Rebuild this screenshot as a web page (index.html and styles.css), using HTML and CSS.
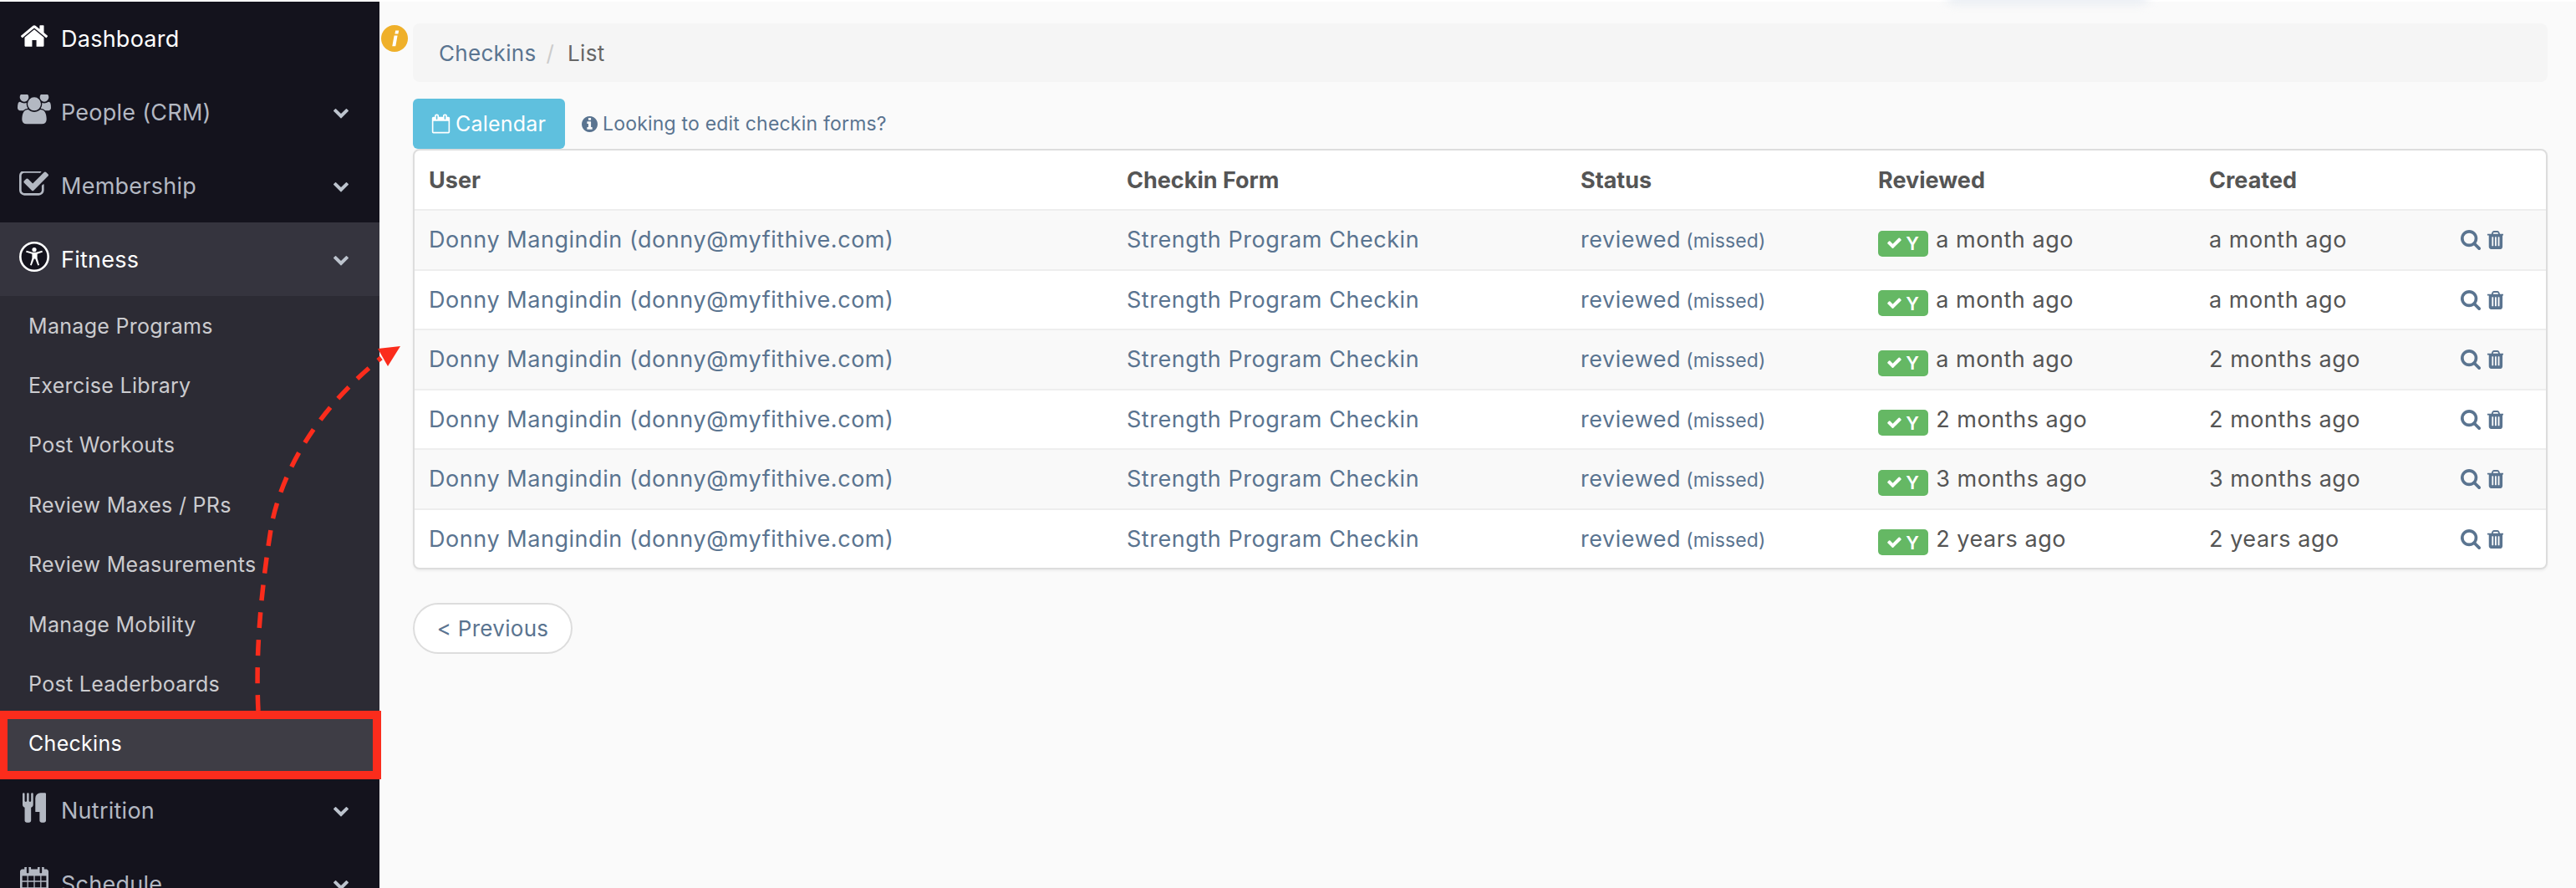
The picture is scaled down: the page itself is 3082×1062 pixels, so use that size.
FILE: index.html
```html
<!DOCTYPE html>
<html lang="en">
<head>
<meta charset="utf-8">
<title>Checkins</title>
<link rel="stylesheet" href="styles.css">
</head>
<body>
<svg class="defs" width="0" height="0" aria-hidden="true">
  <symbol id="i-home" viewBox="96 256 1600 1280"><path d="M1472 992v480q0 26-19 45t-45 19h-384v-384h-256v384h-384q-26 0-45-19t-19-45v-480q0-1 .5-3t.5-3l575-474 575 474q1 2 1 6zm223-69l-62 74q-8 9-21 11h-3q-13 0-21-7l-692-577-692 577q-12 8-24 7-13-2-21-11l-62-74q-8-10-7-23.5t11-21.5l719-599q32-26 76-26t76 26l244 204v-195q0-14 9-23t23-9h192q14 0 23 9t9 23v408l219 182q10 8 11 21.5t-7 23.5z"/></symbol>
  <symbol id="i-users" viewBox="0 128 1920 1664"><path d="M593 896q-162 5-265 128h-134q-82 0-138-40.5t-56-118.5q0-353 124-353 6 0 43.5 21t97.5 42.5 119 21.5q67 0 133-23-5 37-5 66 0 139 81 256zm1071 637q0 120-73 189.5t-194 69.5h-874q-121 0-194-69.5t-73-189.5q0-53 3.5-103.5t14-109 26.5-108.5 43-97.5 62-81 85.5-53.5 111.5-20q10 0 43 21.5t73 48 107 48 135 21.5 135-21.5 107-48 73-48 43-21.5q61 0 111.5 20t85.5 53.5 62 81 43 97.5 26.5 108.5 14 109 3.5 103.5zm-1024-1277q0 106-75 181t-181 75-181-75-75-181 75-181 181-75 181 75 75 181zm704 384q0 159-112.5 271.5t-271.5 112.5-271.5-112.5-112.5-271.5 112.5-271.5 271.5-112.5 271.5 112.5 112.5 271.5zm576 225q0 78-56 118.5t-138 40.5h-134q-103-123-265-128 81-117 81-256 0-29-5-66 66 23 133 23 59 0 119-21.5t97.5-42.5 43.5-21q124 0 124 353zm-128-609q0 106-75 181t-181 75-181-75-75-181 75-181 181-75 181 75 75 181z"/></symbol>
  <symbol id="i-check-sq" viewBox="64 192 1664 1344"><path d="M1472 930v318q0 119-84.5 203.5t-203.5 84.5h-832q-119 0-203.5-84.5t-84.5-203.5v-832q0-119 84.5-203.5t203.5-84.5h832q63 0 117 25 15 7 18 23 3 17-9 29l-49 49q-10 10-23 10-3 0-9-2-23-6-45-6h-832q-66 0-113 47t-47 113v832q0 66 47 113t113 47h832q66 0 113-47t47-113v-254q0-13 9-22l64-64q10-10 23-10 6 0 12 3 20 8 20 29zm231-489l-814 814q-24 24-57 24t-57-24l-430-430q-24-24-24-57t24-57l110-110q24-24 57-24t57 24l263 263 647-647q24-24 57-24t57 24l110 110q24 24 24 57t-24 57z"/></symbol>
  <symbol id="i-access" viewBox="0 0 36 36">
    <circle cx="18" cy="18" r="18" fill="#fff"/>
    <circle cx="18" cy="18" r="15.4" fill="#14131d"/>
    <circle cx="18" cy="9.5" r="2.6" fill="#fff"/>
    <path fill="#fff" d="M8 12.4l.7-1.6 7 1.9h4.6l7-1.9.7 1.6-6.4 2.3v5l2.4 8.2-1.7.6-3.1-8h-1.4l-3.1 8-1.7-.6 2.4-8.2v-5z"/>
  </symbol>
  <symbol id="i-cutlery" viewBox="192 0 1408 1792"><path d="M832 64v640q0 61-35.5 111t-92.5 70v779q0 52-38 90t-90 38h-128q-52 0-90-38t-38-90v-779q-57-20-92.5-70t-35.5-111v-640q0-26 19-45t45-19 45 19 19 45v416q0 26 19 45t45 19 45-19 19-45v-416q0-26 19-45t45-19 45 19 19 45v416q0 26 19 45t45 19 45-19 19-45v-416q0-26 19-45t45-19 45 19 19 45zm768 0v1600q0 52-38 90t-90 38h-128q-52 0-90-38t-38-90v-512h-224q-13 0-22.5-9.5t-9.5-22.5v-800q0-132 94-226t226-94h256q26 0 45 19t19 45z"/></symbol>
  <symbol id="i-calendar" viewBox="64 128 1664 1664"><path d="M192 1664h288v-288h-288v288zm352 0h320v-288h-320v288zm-352-352h288v-320h-288v320zm352 0h320v-320h-320v320zm-352-384h288v-288h-288v288zm736 736h320v-288h-320v288zm-384-736h320v-288h-320v288zm768 736h288v-288h-288v288zm-384-352h320v-320h-320v320zm-352-864v-288q0-13-9.5-22.5t-22.5-9.5h-64q-13 0-22.5 9.5t-9.5 22.5v288q0 13 9.5 22.5t22.5 9.5h64q13 0 22.5-9.5t9.5-22.5zm736 864h288v-320h-288v320zm-384-384h320v-288h-320v288zm384 0h288v-288h-288v288zm32-480v-288q0-13-9.5-22.5t-22.5-9.5h-64q-13 0-22.5 9.5t-9.5 22.5v288q0 13 9.5 22.5t22.5 9.5h64q13 0 22.5-9.5t9.5-22.5zm384-64v1280q0 52-38 90t-90 38h-1408q-52 0-90-38t-38-90v-1280q0-52 38-90t90-38h128v-96q0-66 47-113t113-47h64q66 0 113 47t47 113v96h384v-96q0-66 47-113t113-47h64q66 0 113 47t47 113v96h128q52 0 90 38t38 90z"/></symbol>
  <symbol id="i-calendar-o" viewBox="0 0 1792 1792"><path d="M192 1664h1408v-1024h-1408v1024zm384-1216v-288q0-14-9-23t-23-9h-64q-14 0-23 9t-9 23v288q0 14 9 23t23 9h64q14 0 23-9t9-23zm768 0v-288q0-14-9-23t-23-9h-64q-14 0-23 9t-9 23v288q0 14 9 23t23 9h64q14 0 23-9t9-23zm384-64v1280q0 52-38 90t-90 38h-1408q-52 0-90-38t-38-90v-1280q0-52 38-90t90-38h128v-96q0-66 47-113t113-47h64q66 0 113 47t47 113v96h384v-96q0-66 47-113t113-47h64q66 0 113 47t47 113v96h128q52 0 90 38t38 90z"/></symbol>
  <symbol id="i-chev" viewBox="0 0 1792 1792"><path d="M1683 808l-742 741q-19 19-45 19t-45-19l-742-741q-19-19-19-45.5t19-45.5l166-165q19-19 45-19t45 19l531 531 531-531q19-19 45-19t45 19l166 165q19 19 19 45.5t-19 45.5z"/></symbol>
  <symbol id="i-info" viewBox="128 128 1536 1536"><path d="M1152 1376v-160q0-14-9-23t-23-9h-96v-512q0-14-9-23t-23-9h-320q-14 0-23 9t-9 23v160q0 14 9 23t23 9h96v320h-96q-14 0-23 9t-9 23v160q0 14 9 23t23 9h448q14 0 23-9t9-23zm-128-896v-160q0-14-9-23t-23-9h-192q-14 0-23 9t-9 23v160q0 14 9 23t23 9h192q14 0 23-9t9-23zm640 416q0 209-103 385.5t-279.5 279.5-385.5 103-385.5-103-279.5-279.5-103-385.5 103-385.5 279.5-279.5 385.5-103 385.5 103 279.5 279.5 103 385.5z"/></symbol>
  <symbol id="i-search" viewBox="64 128 1664 1664"><path d="M1216 832q0-185-131.5-316.5t-316.5-131.5-316.5 131.5-131.5 316.5 131.5 316.5 316.5 131.5 316.5-131.5 131.5-316.5zm512 832q0 52-38 90t-90 38q-54 0-90-38l-343-342q-179 124-399 124-143 0-273.5-55.5t-225-150-150-225-55.5-273.5 55.5-273.5 150-225 225-150 273.5-55.5 273.5 55.5 225 150 150 225 55.5 273.5q0 220-124 399l343 343q37 37 37 90z"/></symbol>
  <symbol id="i-trash" viewBox="128 128 1408 1536"><path d="M704 1376v-704q0-14-9-23t-23-9h-64q-14 0-23 9t-9 23v704q0 14 9 23t23 9h64q14 0 23-9t9-23zm256 0v-704q0-14-9-23t-23-9h-64q-14 0-23 9t-9 23v704q0 14 9 23t23 9h64q14 0 23-9t9-23zm256 0v-704q0-14-9-23t-23-9h-64q-14 0-23 9t-9 23v704q0 14 9 23t23 9h64q14 0 23-9t9-23zm-544-992h448l-48-117q-7-9-17-11h-317q-10 2-17 11zm928 32v64q0 14-9 23t-23 9h-96v948q0 83-47 143.5t-113 60.5h-832q-66 0-113-58.5t-47-141.5v-952h-96q-14 0-23-9t-9-23v-64q0-14 9-23t23-9h309l70-167q15-37 54-63t79-26h320q40 0 79 26t54 63l70 167h309q14 0 23 9t9 23z"/></symbol>
  <symbol id="i-check" viewBox="100 350 1600 1200"><path d="M1671 566q0 40-28 68l-724 724-136 136q-28 28-68 28t-68-28l-136-136-362-362q-28-28-28-68t28-68l136-136q28-28 68-28t68 28l294 295 656-657q28-28 68-28t68 28l136 136q28 28 28 68z"/></symbol>
</svg>

<div class="app">
  <nav class="sidebar">
    <a class="nav-row is-lit"><span class="nav-icon"><svg class="ic-home"><use href="#i-home"/></svg></span><span class="nav-label">Dashboard</span></a>
    <a class="nav-row"><span class="nav-icon"><svg class="ic-users"><use href="#i-users"/></svg></span><span class="nav-label">People (CRM)</span><svg class="chev"><use href="#i-chev"/></svg></a>
    <a class="nav-row"><span class="nav-icon"><svg class="ic-sq"><use href="#i-check-sq"/></svg></span><span class="nav-label">Membership</span><svg class="chev"><use href="#i-chev"/></svg></a>
    <a class="nav-row is-lit is-open"><span class="nav-icon"><svg class="ic-access"><use href="#i-access"/></svg></span><span class="nav-label">Fitness</span><svg class="chev"><use href="#i-chev"/></svg></a>
    <div class="subnav">
      <a class="sub-row">Manage Programs</a>
      <a class="sub-row">Exercise Library</a>
      <a class="sub-row">Post Workouts</a>
      <a class="sub-row">Review Maxes / PRs</a>
      <a class="sub-row">Review Measurements</a>
      <a class="sub-row">Manage Mobility</a>
      <a class="sub-row">Post Leaderboards</a>
      <a class="sub-row is-active">Checkins</a>
    </div>
    <a class="nav-row"><span class="nav-icon"><svg class="ic-cut"><use href="#i-cutlery"/></svg></span><span class="nav-label">Nutrition</span><svg class="chev"><use href="#i-chev"/></svg></a>
    <a class="nav-row"><span class="nav-icon"><svg class="ic-cal"><use href="#i-calendar"/></svg></span><span class="nav-label">Schedule</span><svg class="chev"><use href="#i-chev"/></svg></a>
  </nav>

  <main class="main">
    <div class="crumbs"><a class="crumb-link">Checkins</a><span class="crumb-sep">/</span><span class="crumb-cur">List</span></div>
    <div class="toolbar">
      <a class="btn-cal"><svg class="ic-calo"><use href="#i-calendar-o"/></svg>Calendar</a>
      <a class="help-link"><svg class="ic-info"><use href="#i-info"/></svg>Looking to edit checkin forms?</a>
    </div>
    <div class="card">
      <table class="grid">
        <colgroup><col class="c1"><col class="c2"><col class="c3"><col class="c4"><col class="c5"><col class="c6"></colgroup>
        <thead><tr><th>User</th><th>Checkin Form</th><th>Status</th><th>Reviewed</th><th>Created</th><th></th></tr></thead>
        <tbody>
          <tr><td><a>Donny Mangindin (donny@myfithive.com)</a></td><td><a>Strength Program Checkin</a></td><td><a>reviewed</a> <small>(missed)</small></td><td><span class="badge"><svg class="ic-check"><use href="#i-check"/></svg>Y</span> a month ago</td><td>a month ago</td><td><span class="acts"><svg class="ic-search"><use href="#i-search"/></svg><svg class="ic-trash"><use href="#i-trash"/></svg></span></td></tr>
          <tr><td><a>Donny Mangindin (donny@myfithive.com)</a></td><td><a>Strength Program Checkin</a></td><td><a>reviewed</a> <small>(missed)</small></td><td><span class="badge"><svg class="ic-check"><use href="#i-check"/></svg>Y</span> a month ago</td><td>a month ago</td><td><span class="acts"><svg class="ic-search"><use href="#i-search"/></svg><svg class="ic-trash"><use href="#i-trash"/></svg></span></td></tr>
          <tr><td><a>Donny Mangindin (donny@myfithive.com)</a></td><td><a>Strength Program Checkin</a></td><td><a>reviewed</a> <small>(missed)</small></td><td><span class="badge"><svg class="ic-check"><use href="#i-check"/></svg>Y</span> a month ago</td><td>2 months ago</td><td><span class="acts"><svg class="ic-search"><use href="#i-search"/></svg><svg class="ic-trash"><use href="#i-trash"/></svg></span></td></tr>
          <tr><td><a>Donny Mangindin (donny@myfithive.com)</a></td><td><a>Strength Program Checkin</a></td><td><a>reviewed</a> <small>(missed)</small></td><td><span class="badge"><svg class="ic-check"><use href="#i-check"/></svg>Y</span> 2 months ago</td><td>2 months ago</td><td><span class="acts"><svg class="ic-search"><use href="#i-search"/></svg><svg class="ic-trash"><use href="#i-trash"/></svg></span></td></tr>
          <tr><td><a>Donny Mangindin (donny@myfithive.com)</a></td><td><a>Strength Program Checkin</a></td><td><a>reviewed</a> <small>(missed)</small></td><td><span class="badge"><svg class="ic-check"><use href="#i-check"/></svg>Y</span> 3 months ago</td><td>3 months ago</td><td><span class="acts"><svg class="ic-search"><use href="#i-search"/></svg><svg class="ic-trash"><use href="#i-trash"/></svg></span></td></tr>
          <tr><td><a>Donny Mangindin (donny@myfithive.com)</a></td><td><a>Strength Program Checkin</a></td><td><a>reviewed</a> <small>(missed)</small></td><td><span class="badge"><svg class="ic-check"><use href="#i-check"/></svg>Y</span> 2 years ago</td><td>2 years ago</td><td><span class="acts"><svg class="ic-search"><use href="#i-search"/></svg><svg class="ic-trash"><use href="#i-trash"/></svg></span></td></tr>
        </tbody>
      </table>
    </div>
    <a class="btn-prev">&lt; Previous</a>
  </main>
</div>

<svg class="tip-dot" viewBox="0 0 32 32" aria-hidden="true"><circle cx="16" cy="16" r="16" fill="#efb02a"/><path fill="#fff" d="M17.2 6.6h4l-.8 4h-4zM15.6 12.6h4l-2.3 12.6h-4z"/></svg>
<div class="top-glow"></div>
<div class="callout-box"></div>
<svg class="callout-arrow" viewBox="0 0 520 900" aria-hidden="true">
  <path class="arrow-line" d="M309 850C306 790 310 720 325 627C340 555 385 485 456 428"/>
  <path class="arrow-head" d="M479 414L452 417L464 438Z"/>
</svg>
</body>
</html>
```

FILE: styles.css
```css
* { box-sizing: border-box; }
html, body { margin: 0; padding: 0; height: 100%; overflow: hidden; }
body { background: #fff; font-family: Inter, "Open Sans", sans-serif; color: #555; position: relative; }
a { color: inherit; text-decoration: none; }
.defs { position: absolute; }

.app { display: flex; height: 1060px; margin-top: 2px; overflow: hidden; }

.sidebar { width: 454px; flex: none; background: #14131d; overflow: hidden; }
.nav-row { display: flex; align-items: center; height: 88px; padding-right: 36px; color: #b3b8c2; font-size: 27px; letter-spacing: 0.25px; }
.nav-row.is-lit { color: #fff; }
.nav-row.is-open { background: #35343e; }
.nav-icon { width: 73px; flex: none; display: flex; justify-content: center; padding-left: 8px; fill: currentColor; margin-top: -6px; }
.nav-label { flex: 1; }
.ic-home { width: 32px; height: 26px; }
.ic-users { width: 40px; height: 36px; }
.ic-sq { width: 35px; height: 29px; }
.ic-access { width: 36px; height: 36px; }
.ic-cut { width: 28px; height: 36px; }
.ic-cal { width: 34px; height: 34px; }
.chev { width: 20px; height: 20px; fill: #bcc3cd; flex: none; }

.subnav { background: #2c2b34; }
.sub-row { display: flex; align-items: center; height: 71.375px; padding-left: 34px; color: #cbcbcf; font-size: 25px; letter-spacing: 0.3px; }
.sub-row.is-active { background: #3e3d45; color: #fff; }

.main { flex: 1; background: #fafafa; padding: 26px 34px 0 40px; min-width: 0; }
.crumbs { height: 70px; background: #f5f5f5; border-radius: 8px; display: flex; align-items: center; padding-left: 31px; font-size: 26px; letter-spacing: 0.3px; margin-bottom: 20px; }
.crumb-link { color: #5a7490; }
.crumb-sep { color: #ccc; margin: 0 16px 0 12px; }
.crumb-cur { color: #666; }

.toolbar { display: flex; align-items: center; height: 60px; }
.btn-cal { width: 182px; height: 60px; background: #5fc0de; border-radius: 6px; display: flex; align-items: center; padding-left: 22px; color: #fff; font-size: 25px; letter-spacing: 0.2px; fill: #fff; }
.ic-calo { width: 23px; height: 24px; margin-right: 6px; flex: none; }
.help-link { display: flex; align-items: center; margin-left: 20px; color: #5a7490; font-size: 23px; letter-spacing: 0.2px; fill: #5a7490; }
.ic-info { width: 19px; height: 19px; margin-right: 6px; flex: none; }

.card { background: #fff; border: 2px solid #ddd; border-radius: 8px; overflow: hidden; box-shadow: 0 2px 3px rgba(0,0,0,.05); }
.grid { width: 100%; border-collapse: collapse; table-layout: fixed; font-size: 27px; letter-spacing: 0.55px; }
.c1 { width: 835px; } .c2 { width: 543px; } .c3 { width: 356px; } .c4 { width: 396px; } .c5 { width: 301px; } .c6 { width: 119px; }
.grid th { height: 71px; padding: 0 0 0 17px; text-align: left; font-weight: 700; color: #555; letter-spacing: 0; border-bottom: 2px solid #eee; }
.grid td { height: 71.5px; padding: 0 0 0 17px; color: #555; border-top: 2px solid #eee; white-space: nowrap; }
.grid tbody tr:first-child td { border-top: 0; }
.grid tbody tr:last-child td { height: 70px; }
.grid tbody tr:nth-child(odd) td { background: #f9f9f9; }
.grid td a { color: #5a7490; }
.grid small { font-size: 23px; letter-spacing: 0.1px; color: #5a7490; margin-left: -2px; }
.badge { display: inline-flex; align-items: center; justify-content: center; gap: 5px; width: 60px; height: 31px; margin: -8px 1px -8px 0; background: #65b864; border-radius: 5px; color: #fff; font-size: 22px; font-weight: 600; letter-spacing: 0; fill: #fff; vertical-align: -2px; }
.ic-check { width: 17px; height: 14px; }
.acts { display: inline-flex; align-items: center; gap: 7px; margin: -8px 0; fill: #5a7490; vertical-align: -3px; }
.ic-search { width: 24px; height: 24px; }
.ic-trash { width: 20px; height: 24px; }

.btn-prev { display: inline-flex; align-items: center; justify-content: center; margin-top: 40px; width: 191px; height: 61px; background: #fff; border: 2px solid #ddd; border-radius: 31px; color: #5a7490; font-size: 26px; letter-spacing: 0.3px; }

.tip-dot { position: absolute; left: 456px; top: 30px; width: 32px; height: 32px; }
.top-glow { position: absolute; left: 2330px; top: -8px; width: 240px; height: 12px; background: #e6ebf2; filter: blur(6px); border-radius: 8px; }
.callout-box { position: absolute; left: 0; top: 850px; width: 456px; height: 82px; border: 10px solid #fb2c1c; border-left-width: 9px; pointer-events: none; }
.callout-arrow { position: absolute; left: 0; top: 0; width: 520px; height: 900px; pointer-events: none; }
.arrow-line { fill: none; stroke: #fb2c1c; stroke-width: 5.5; stroke-dasharray: 19 14; }
.arrow-head { fill: #fb2c1c; }
```
